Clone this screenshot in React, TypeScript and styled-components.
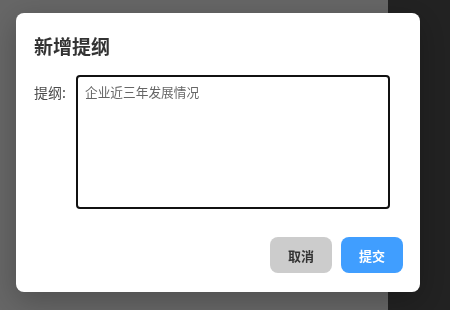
import React, { useState } from 'react';
import styled, { createGlobalStyle } from 'styled-components';

const GlobalStyle = createGlobalStyle`
   html, body, #root {
      margin: 0;
      padding: 0;
      width: 100%;
      height: 100%;
   }
   body {
      font-family: 'Noto Sans CJK SC', 'Noto Sans', sans-serif;
      overflow: hidden;
   }
`;

const Page = styled.div`
   display: flex;
   width: 100%;
   height: 100%;
`;

const Main = styled.div`
   flex: 1;
   background: #fff;
`;

const Sidebar = styled.div`
   width: 62px;
   background: #555;
`;

const Background = styled.div`
   position: fixed;
   inset: 0;
   background: rgba(0, 0, 0, 0.6);
   display: flex;
   align-items: flex-start;
   justify-content: flex-start;
   padding: 13px 0 0 16px;
`;

const ModalWrapper = styled.div`
   width: 404px;
   box-sizing: border-box;
   padding: 20px 17px 19px 18px;
   background: #fff;
   border-radius: 8px;
   box-shadow: 0 8px 30px rgba(0, 0, 0, 0.25);
   display: flex;
   flex-direction: column;
`;

const Title = styled.h2`
   margin: 0;
   font-size: 19px;
   line-height: 26px;
   font-weight: 700;
   color: #333;
`;

const FieldRow = styled.div`
   display: flex;
   margin-top: 16px;
`;

const Label = styled.label`
   width: 42px;
   padding-top: 7px;
   font-size: 14px;
   line-height: 20px;
   color: #4a4a4a;
`;

const TextArea = styled.textarea`
   width: 314px;
   height: 134px;
   box-sizing: border-box;
   margin: 0;
   padding: 6px 7px;
   border: 2px solid #111;
   border-radius: 4px;
   resize: none;
   outline: none;
   font-family: inherit;
   font-size: 12.7px;
   line-height: 18px;
   color: #333;
   &::placeholder {
      color: #666;
   }
`;

const Footer = styled.div`
   display: flex;
   justify-content: flex-end;
   gap: 9px;
   margin-top: 28px;
`;

const Button = styled.button<{ $primary?: boolean }>`
   width: 62px;
   height: 36px;
   border: none;
   border-radius: 8px;
   font-family: inherit;
   font-size: 13px;
   font-weight: 600;
   cursor: pointer;
   background: ${(p) => (p.$primary ? '#409eff' : '#ccc')};
   color: ${(p) => (p.$primary ? '#fff' : '#333')};
   &:hover {
      opacity: 0.8;
   }
`;

const App: React.FC = () => {
   const [outline, setOutline] = useState('');

   return (
      <>
         <GlobalStyle />
         <Page>
            <Main />
            <Sidebar />
         </Page>
         <Background>
            <ModalWrapper>
               <Title>新增提纲</Title>
               <FieldRow>
                  <Label htmlFor="outline">提纲:</Label>
                  <TextArea
                     id="outline"
                     value={outline}
                     placeholder="企业近三年发展情况"
                     onChange={(e) => setOutline(e.target.value)}
                  />
               </FieldRow>
               <Footer>
                  <Button>取消</Button>
                  <Button $primary>提交</Button>
               </Footer>
            </ModalWrapper>
         </Background>
      </>
   );
};

export default App;
